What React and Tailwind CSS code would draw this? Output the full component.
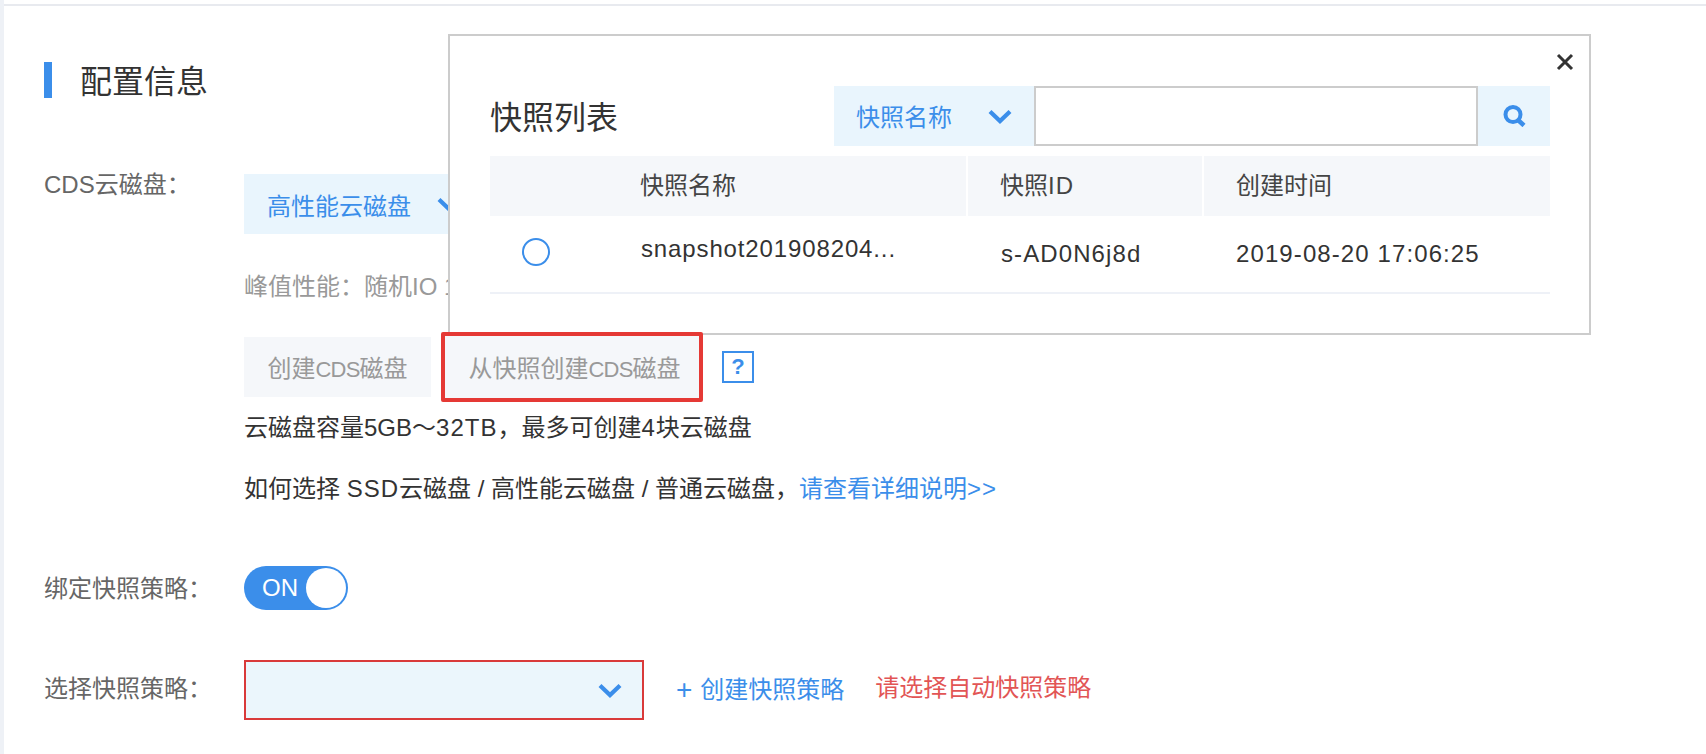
const FONT = "font-['Liberation_Sans','Noto_Sans_CJK_SC',sans-serif]";

function L({ children }) {
  return <span className="tracking-[1px]">{children}</span>;
}

function Chevron({ className }) {
  return (
    <svg viewBox="0 0 24 15" className={className} fill="none" stroke="#3b8eea" strokeWidth="4.2">
      <path d="M2 2.5 L12 12 L22 2.5" />
    </svg>
  );
}

function Search() {
  return (
    <svg viewBox="0 0 23 22" className="w-[23px] h-[22px]" fill="none" stroke="#3b8eea">
      <circle cx="10" cy="9.5" r="7.5" strokeWidth="4" />
      <path d="M15 15 L21 20.5" strokeWidth="4.5" />
    </svg>
  );
}

function Modal() {
  return (
    <div className="absolute left-[448px] top-[34px] w-[1143px] h-[301px] bg-white border-2 border-[#cccccc] z-10">
      <div className="absolute right-[15px] top-[17px] w-[18px] h-[18px]">
        <svg viewBox="0 0 18 18" className="w-[18px] h-[18px]" fill="none" stroke="#333" strokeWidth="3">
          <path d="M2 2 L16 16 M16 2 L2 16" />
        </svg>
      </div>
      <div className="pl-[40px] pr-[39px] pt-[50px]">
        <div className="flex items-center h-[60px]">
          <div className="w-[344px] pt-[4px] text-[32px] text-[#333]">快照列表</div>
          <div className="flex-1 flex h-[60px] bg-[#e9f5fd]">
            <div className="w-[200px] flex items-center pl-[22px] text-[24px] text-[#3b8eea]">
              <span className="pt-[4px]">快照名称</span>
              <Chevron className="w-[24px] h-[15px] ml-[36px]" />
            </div>
            <div className="w-[444px] border-2 border-[#cccccc] bg-white" />
            <div className="flex-1 flex items-center justify-center">
              <Search />
            </div>
          </div>
        </div>
        <div className="mt-[10px] flex h-[60px] bg-[#f5f7fa] text-[24px] text-[#444] items-center">
          <div className="w-[478px] h-full border-r-2 border-white pl-[150px] flex items-center">快照名称</div>
          <div className="w-[236px] h-full border-r-2 border-white pl-[32px] flex items-center">快照<L>ID</L></div>
          <div className="flex-1 h-full pl-[32px] flex items-center">创建时间</div>
        </div>
        <div className="flex h-[78px] border-b-2 border-[#eef1f7] text-[24px] text-[#333] items-center">
          <div className="w-[151px] pl-[32px] mb-[4px]">
            <div className="w-[28px] h-[28px] rounded-full border-2 border-[#3b8eea]" />
          </div>
          <div className="w-[327px] mb-[10px] tracking-[0.87px]">snapshot201908204...</div>
          <div className="w-[236px] pl-[33px] tracking-[1.1px]">s-AD0N6j8d</div>
          <div className="flex-1 pl-[32px] tracking-[1.1px]">2019-08-20 17:06:25</div>
        </div>
      </div>
    </div>
  );
}

export default function App() {
  return (
    <div className={`relative flex w-[1706px] h-[754px] overflow-hidden bg-white text-[24px] ${FONT}`}>
      <div className="w-1 h-full bg-[#eef1f6]" />
      <div className="flex-1 pt-1">
        <div className="h-[2px] bg-[#e8eaef]" />
        <div className="pl-10 pt-[56px]">
          <div className="flex items-center h-[36px]">
            <div className="w-2 h-[36px] bg-[#3b8eea]" />
            <div className="ml-[28px] pt-[4px] text-[32px] text-[#333]">配置信息</div>
          </div>

          <div className="flex mt-[76px]">
            <div className="w-[200px] text-[#666] leading-[40px] -mt-[9px] h-[40px]">CDS云磁盘：</div>
            <div className="flex-1">
              <div className="flex items-center w-[240px] h-[60px] bg-[#e9f5fd] pl-[23px] text-[#3b8eea]">
                <span className="pt-[5px]">高性能云磁盘</span>
                <Chevron className="w-[24px] h-[15px] ml-[26px]" />
              </div>
              <div className="mt-[36px] h-[34px] leading-[34px] text-[#999]">峰值性能：随机IO 1</div>
              <div className="mt-[33px] flex items-center">
                <div className="w-[187px] h-[60px] pt-[4px] bg-[#f5f7fa] flex items-center justify-center text-[#999]">创建<span className="text-[22px] tracking-[-0.8px]">CDS</span>磁盘</div>
                <div className="relative z-20 ml-[10px] w-[262px] h-[70px] -my-[5px] pt-[4px] pl-[5px] rounded-[2px] bg-[#f5f7fa] border-[4px] border-[#e53935] flex items-center justify-center text-[#999]">从快照创建<span className="text-[22px] tracking-[-0.8px]">CDS</span>磁盘</div>
                <div className="ml-[19px] w-[32px] h-[32px] border-2 border-[#3b8eea] flex items-center justify-center text-[#3b8eea] text-[22px] font-bold leading-none">?</div>
              </div>
              <div className="mt-[19px] h-[24px] leading-[24px] text-[#333]">云磁盘容量5GB～<L>32TB</L>，最多可创建<L>4</L>块云磁盘</div>
              <div className="mt-[37px] h-[24px] leading-[24px] text-[#333]">如何选择 <L>SSD</L>云磁盘 / 高性能云磁盘 / 普通云磁盘，<span className="text-[#3b8eea]">请查看详细说明<L>&gt;&gt;</L></span></div>
            </div>
          </div>

          <div className="flex items-center mt-[65px] h-[44px]">
            <div className="w-[200px] pt-[2px] text-[#666]">绑定快照策略：</div>
            <div className="flex items-center justify-between w-[104px] h-[44px] rounded-full bg-[#3b8eea] pl-[18px] pr-[2px] text-white">
              <span>ON</span>
              <div className="w-[40px] h-[40px] rounded-full bg-white" />
            </div>
          </div>

          <div className="flex items-center mt-[50px] h-[60px]">
            <div className="w-[200px] text-[#666] -mt-[2px]">选择快照策略：</div>
            <div className="flex items-center justify-end w-[400px] h-[60px] bg-[#ebf6fc] border-2 border-[#d93a3a] pr-[20px]">
              <Chevron className="w-[24px] h-[15px]" />
            </div>
            <div className="ml-[32px] flex items-center text-[#3b8eea]">
              <span className="text-[28px] font-light leading-none">+</span>
              <span className="ml-[8px]">创建快照策略</span>
            </div>
            <div className="ml-[31px] text-[#e25555] -mt-[4px]">请选择自动快照策略</div>
          </div>
        </div>
      </div>
      <Modal />
    </div>
  );
}
